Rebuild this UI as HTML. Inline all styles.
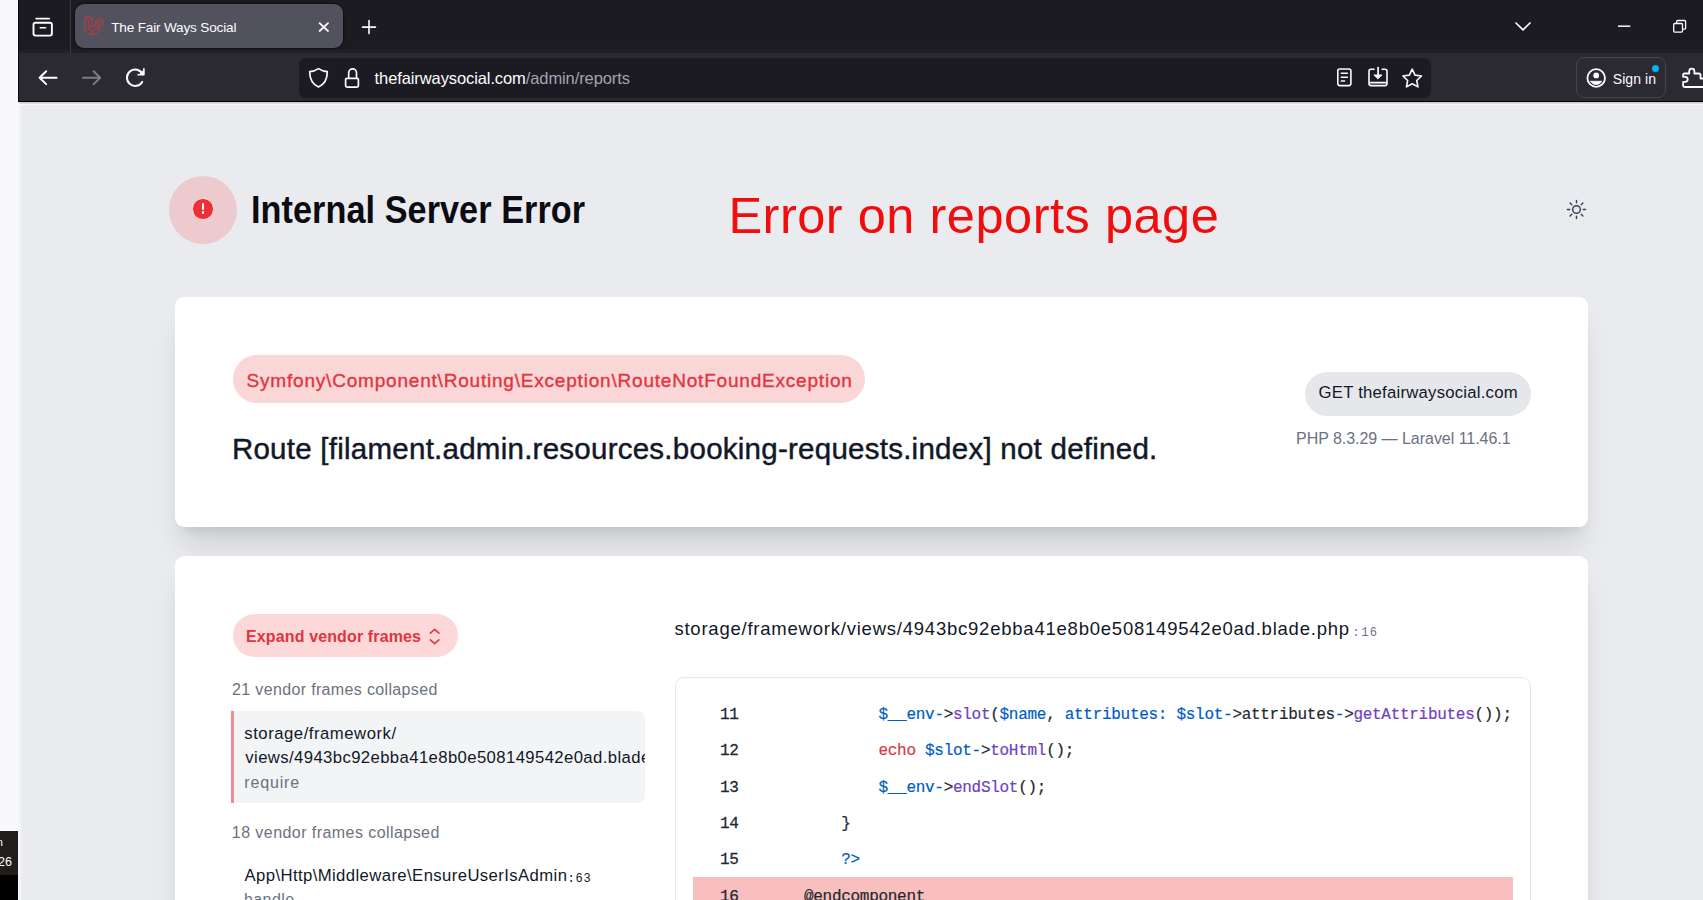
<!DOCTYPE html>
<html lang="en">
<head>
<meta charset="utf-8">
<title>The Fair Ways Social</title>
<style>
*{box-sizing:border-box;margin:0;padding:0}
html,body{width:1703px;height:900px;overflow:hidden;background:#eaebef;font-family:"Liberation Sans",sans-serif;color:#111827}
.abs{position:absolute}
.t{position:absolute;white-space:nowrap;line-height:1;transform-origin:0 0}
svg{position:absolute;overflow:visible}
#leftstrip{left:0;top:0;width:18px;height:900px;background:#f9f9fd}
#leftedge{left:18px;top:101px;width:3.5px;height:799px;background:linear-gradient(90deg,#f6f7fa,#f1f2f6 60%,#eaebef)}
#leftdark{left:0;top:831px;width:17.8px;height:44px;background:#201e1d}
#leftblack{left:0;top:875px;width:17.8px;height:26px;background:#000}
#tabbar{left:19px;top:0;width:1684px;height:53px;background:linear-gradient(#1c1b22 0,#1c1b22 47px,#222128 53px)}
#toolbar{left:19px;top:53px;width:1684px;height:48px;background:#2b2a33}
#chromeline{left:19px;top:100px;width:1684px;height:5px;background:linear-gradient(#2c2c31 0,#2c2c31 1px,#000 1px,#000 2px,#cbccd1 2px,#cbccd1 3px,#dddde2 3px,#dddde2 4px,#f6f7fb 4px,#f6f7fb 5px)}
#winedge{left:18.3px;top:0;width:1px;height:101.5px;background:#0b0a10}
#tab{left:75px;top:4px;width:267.6px;height:44px;border-radius:9px;background:#52525e;box-shadow:0 0 1.5px 1px rgba(0,0,0,.45)}
#tabsep{left:70px;top:0;width:1px;height:53px;background:#3b3a44}
#urlbar{left:299.3px;top:57.5px;width:1132px;height:40.2px;border-radius:7px;background:#1c1b22}
#signin{left:1576px;top:57px;width:90px;height:41px;border-radius:8px;border:1px solid #45444f;background:#2b2a33}
.card{position:absolute;background:#fff;border-radius:9px;box-shadow:0 25px 31px -6px rgba(0,0,0,.1),0 10px 12.5px -7.5px rgba(0,0,0,.1)}
.mono{font-family:"Liberation Mono",monospace}
.code{position:absolute;white-space:pre;line-height:1;font-family:"Liberation Mono",monospace;font-size:16px;letter-spacing:-0.29px;color:#24292e;-webkit-text-stroke:0.2px}
.ln{position:absolute;white-space:pre;line-height:1;font-family:"Liberation Mono",monospace;font-size:16px;letter-spacing:-0.29px;color:#1f2937;-webkit-text-stroke:0.3px #1f2937}
.b{color:#005cc5}.p{color:#6f42c1}.r{color:#d73a49}
</style>
</head>
<body>
<div class="abs" id="leftstrip"></div>
<div class="abs" id="leftedge"></div>
<div class="abs" id="leftdark"></div>
<div class="abs" id="leftblack"></div>
<div class="t" style="left:-3.3px;top:837.4px;font-size:11px;color:#fff">n</div>
<div class="t" style="left:-1.9px;top:855.6px;font-size:12.5px;color:#fff">26</div>

<!-- browser chrome -->
<div class="abs" id="tabbar"></div>
<div class="abs" id="toolbar"></div>
<div class="abs" id="chromeline"></div>
<div class="abs" id="winedge"></div>
<div class="abs" id="tabsep"></div>
<div class="abs" id="tab"></div>
<div class="t" id="tabtitle" style="left:111.20px;top:21.25px;font-size:13.6px;color:#fbfbfe;letter-spacing:-0.179px">The Fair Ways Social</div>
<div class="abs" id="urlbar"></div>
<div class="t" id="url" style="left:374.60px;top:70.00px;font-size:16.5px;color:#fbfbfe;letter-spacing:-0.100px">thefairwaysocial.com<span style="color:#a3a3ad">/admin/reports</span></div>
<div class="abs" id="signin"></div>
<div class="t" id="signintxt" style="left:1612.70px;top:71.85px;font-size:14px;color:#fbfbfe;letter-spacing:0.100px">Sign in</div>
<div class="abs" style="left:1652px;top:65px;width:7px;height:7px;border-radius:50%;background:#00b3f4"></div>

<!-- ICONS-CHROME -->
<svg id="chromeicons" style="left:0;top:0" width="1703" height="110" viewBox="0 0 1703 110" fill="none" stroke="#fbfbfe" stroke-width="1.7" stroke-linecap="round" stroke-linejoin="round">
  <!-- firefox view -->
  <path d="M36.200 18.600H49.200" stroke-width="1.900"/>
  <rect x="33.500" y="22.800" width="18.400" height="12.800" rx="2" stroke-width="1.900"/>
  <path d="M40.200 27.700H45.600" stroke-width="1.500"/>
  <!-- favicon (laravel mark) -->
  <g transform="translate(84.500 15.800) scale(0.385)" stroke="#d8373f" stroke-width="1.300" fill="#d8373f" opacity="0.7">
    <path fill-rule="evenodd" d="M49.626 11.564a.809.809 0 0 1 .028.209v10.972a.8.8 0 0 1-.402.694l-9.209 5.302V39.250c0 .286-.152.550-.4.694L20.420 51.010c-.044.025-.092.041-.14.058-.018.006-.035.017-.054.022a.805.805 0 0 1-.41 0c-.022-.006-.042-.018-.063-.026-.044-.016-.09-.03-.132-.054L.402 39.944A.801.801 0 0 1 0 39.250V6.334c0-.072.010-.142.028-.21.006-.023.020-.044.028-.067.015-.042.029-.085.051-.124.015-.026.037-.047.055-.071.023-.032.044-.065.071-.093.023-.023.053-.04.079-.06.029-.024.055-.05.088-.069h.001l9.610-5.533a.802.802 0 0 1 .8 0l9.610 5.533h.002c.032.020.059.045.088.068.026.020.055.038.078.060.028.029.048.062.072.094.017.024.040.045.054.071.023.040.036.082.052.124.008.023.022.044.028.068a.809.809 0 0 1 .028.209v20.559l8.008-4.611v-10.510c0-.07.010-.141.028-.208.007-.024.020-.045.028-.068.016-.042.030-.085.052-.124.015-.026.037-.047.054-.071.024-.032.044-.065.072-.093.023-.023.052-.04.078-.06.030-.024.056-.05.088-.069h.001l9.611-5.533a.801.801 0 0 1 .8 0l9.610 5.533c.034.020.060.045.090.068.025.020.054.038.077.060.028.029.048.062.072.094.018.024.040.045.054.071.023.039.036.082.052.124.009.023.022.044.028.068zm-1.574 10.718v-9.124l-3.363 1.936-4.646 2.675v9.124l8.010-4.611zm-9.610 16.505v-9.130l-4.570 2.610-13.050 7.448v9.216l17.620-10.144zM1.602 7.719v31.068L19.220 48.930v-9.214l-9.204-5.209-.003-.002-.004-.002c-.031-.018-.057-.044-.086-.066-.025-.02-.054-.036-.076-.058l-.002-.003c-.026-.025-.044-.056-.066-.084-.02-.027-.044-.05-.06-.078l-.001-.003c-.018-.03-.029-.066-.042-.1-.013-.03-.03-.058-.038-.09v-.001c-.010-.038-.012-.078-.016-.117-.004-.03-.012-.06-.012-.09v-.002-21.481L4.965 9.654 1.602 7.720zm8.810-5.994L2.405 6.334l8.005 4.609 8.006-4.610-8.006-4.608zm4.164 28.764l4.645-2.674V7.719l-3.363 1.936-4.646 2.675v20.096l3.364-1.937zM39.243 7.164l-8.006 4.609 8.006 4.609 8.005-4.610-8.005-4.608zm-.801 10.605l-4.646-2.675-3.363-1.936v9.124l4.645 2.674 3.364 1.937v-9.124zM20.020 38.330l11.743-6.704 5.870-3.350-8-4.606-9.211 5.303-8.395 4.833 7.993 4.524z"/>
  </g>
  <!-- tab close -->
  <path d="M319.600 23.200L328 31M328 23.200L319.600 31" stroke-width="1.800"/>
  <!-- new tab plus -->
  <path d="M362.500 27.100H375.500M369 20.600V33.600" stroke-width="1.600"/>
  <!-- list all tabs chevron -->
  <path d="M1516 23L1523 29.800L1530 23" stroke-width="1.700"/>
  <!-- minimize -->
  <path d="M1618 26.200H1630.300" stroke-width="1.500" stroke-linecap="butt"/>
  <!-- restore -->
  <rect x="1673.700" y="23.500" width="8.800" height="8.600" rx="1" stroke-width="1.300"/>
  <path d="M1676.700 23.300V21.500a1 1 0 0 1 1-1H1684.600a1 1 0 0 1 1 1V28.200a1 1 0 0 1 -1 1H1682.800" stroke-width="1.300"/>
  <!-- back -->
  <path d="M56.600 77.700H39.800M46.200 71.300L39.600 77.700L46.200 84.100" stroke-width="2"/>
  <!-- forward -->
  <path d="M83 77.700H100M93.600 71.300L100.200 77.700L93.600 84.100" stroke="#7c7c87" stroke-width="2"/>
  <!-- reload -->
  <path d="M142.600 74.300A8.200 8.200 0 1 0 142.200 81.900" stroke-width="2"/>
  <path d="M143.900 68.800V74.700H138" stroke-width="1.600"/>
  <path d="M143.900 69.500V74.700H138.700Z" fill="#fbfbfe" stroke="none"/>
  <!-- shield -->
  <path d="M318.500 68.600C321.500 70.600 324.500 71.500 327.300 71.700C327.300 79 324.500 84.200 318.500 87C312.500 84.200 309.700 79 309.700 71.700C312.500 71.500 315.500 70.600 318.500 68.600Z" stroke-width="1.700"/>
  <!-- lock -->
  <rect x="345.600" y="78.300" width="12.800" height="8.800" rx="1.500" stroke-width="1.700"/>
  <path d="M348.700 78V72.800a3.900 3.900 0 0 1 7.800 0V78" stroke-width="1.700"/>
  <!-- reader -->
  <rect x="1337.800" y="69" width="13.100" height="16.600" rx="2" stroke-width="1.600"/>
  <path d="M1341.300 73.300H1347.400M1341.300 77.300H1347.400M1341.300 80.900H1344.600" stroke-width="1.500"/>
  <!-- install / pwa -->
  <path d="M1374 69.300H1371a2 2 0 0 0 -2 2V83.600a2 2 0 0 0 2 2H1385a2 2 0 0 0 2 -2V71.300a2 2 0 0 0 -2 -2H1382.200M1369 82.600H1387" stroke-width="1.600"/>
  <path d="M1378.100 67.600V76" stroke-width="1.700"/>
  <path d="M1374.300 75H1381.900L1378.100 78.600Z" fill="#fbfbfe" stroke-width="1"/>
  <!-- star -->
  <path d="M1412.200 69.200L1415.050 75.150L1421.500 76L1416.750 80.500L1417.950 86.900L1412.200 83.750L1406.450 86.900L1407.650 80.500L1402.900 76L1409.350 75.150Z" stroke-width="1.600"/>
  <!-- avatar -->
  <circle cx="1596.200" cy="78" r="8.800" stroke-width="1.800"/>
  <circle cx="1596.200" cy="75.400" r="2.900" fill="#fbfbfe" stroke="none"/>
  <path d="M1590.600 81.300H1601.800A6.500 6.500 0 0 1 1590.600 81.300Z" fill="#fbfbfe" stroke-width="0.800"/>
  <!-- extensions puzzle -->
  <path d="M1689.200 73.500V71.200a2.600 2.600 0 0 1 5.200 0V73.500H1699a1.500 1.500 0 0 1 1.500 1.500V78.500H1703M1703 87H1684.600a1.500 1.500 0 0 1 -1.500 -1.500V81.800H1685.200a2.500 2.500 0 0 0 0 -5H1683.100V75a1.500 1.500 0 0 1 1.500 -1.500H1689.200" stroke-width="1.800"/>
</svg>
<!-- /ICONS-CHROME -->

<!-- page -->
<div class="abs" id="errcircle" style="left:169px;top:175.5px;width:68px;height:68px;border-radius:50%;background:#eccacd"></div>
<div class="abs" id="errdot" style="left:192.3px;top:198.3px;width:21.4px;height:21.4px;border-radius:50%;background:#ec3036;border:1.2px solid #f6e3e4"></div>
<div class="abs" style="left:202px;top:203.3px;width:2px;height:6.500px;border-radius:1px;background:#fff"></div>
<div class="abs" style="left:201.800px;top:211.400px;width:2.400px;height:2.400px;border-radius:50%;background:#fff"></div>
<div class="t" id="h1" style="left:251.00px;top:190.9px;font-size:38px;font-weight:bold;color:#0b0b12;transform:scaleX(0.9);letter-spacing:0.080px">Internal Server Error</div>
<div class="t" id="annot" style="left:728.40px;top:190.85px;font-size:50.5px;color:#f00d0d;letter-spacing:0.520px">Error on reports page</div>
<svg id="sun" style="left:1565px;top:198px" width="23" height="23" viewBox="0 0 24 24" fill="none" stroke="#374151" stroke-width="1.5" stroke-linecap="round"><circle cx="12" cy="12" r="4"/><path d="M12 2.5v2.5M12 19v2.500M2.500 12h2.500M19 12h2.500M5.300 5.300l1.800 1.800M16.900 16.900l1.800 1.800M5.300 18.700l1.800-1.800M16.900 7.100l1.800-1.800"/></svg>

<div class="card" id="card1" style="left:174.7px;top:296.5px;width:1413.3px;height:230.2px"></div>
<div class="abs" id="badge1" style="left:233px;top:355px;width:632px;height:48px;border-radius:24px;background:#fbd6d7"></div>
<div class="t" id="badge1t" style="left:246.60px;top:370.60px;font-size:19px;color:#e2343f;-webkit-text-stroke:0.35px #e2343f;letter-spacing:0.798px">Symfony\Component\Routing\Exception\RouteNotFoundException</div>
<div class="t" id="msg" style="left:231.90px;top:434.30px;font-size:29.5px;color:#111827;-webkit-text-stroke:0.45px #111827;letter-spacing:0.252px">Route [filament.admin.resources.booking-requests.index] not defined.</div>
<div class="abs" id="getbadge" style="left:1305px;top:372px;width:225.500px;height:43.700px;border-radius:22px;background:#e5e7eb"></div>
<div class="t" id="gett" style="left:1318.60px;top:384.80px;font-size:16.700px;color:#111827;letter-spacing:0.239px">GET thefairwaysocial.com</div>
<div class="t" id="phpt" style="left:1296.00px;top:430.50px;font-size:16px;color:#6b7280;letter-spacing:-0.033px">PHP 8.3.29 — Laravel 11.46.1</div>

<div class="card" id="card2" style="left:174.7px;top:556.2px;width:1413.3px;height:400px"></div>
<div class="abs" id="expbadge" style="left:233px;top:614.2px;width:225.2px;height:43px;border-radius:22px;background:#fcd8d9"></div>
<div class="t" id="expt" style="left:246.00px;top:629.00px;font-size:16px;font-weight:bold;color:#e2343f;letter-spacing:0.132px">Expand vendor frames</div>
<svg id="chev" style="left:428.4px;top:626.6px" width="13.3" height="19" viewBox="0 0 14 20" fill="none" stroke="#e2343f" stroke-width="1.600" stroke-linecap="round" stroke-linejoin="round"><path d="M2.500 6.500L7 2.500l4.500 4M2.500 13.500L7 17.500l4.500-4"/></svg>
<div class="t" id="v21" style="left:232.00px;top:682.20px;font-size:16px;color:#6b7280;letter-spacing:0.352px">21 vendor frames collapsed</div>
<div class="abs" id="framebox" style="left:231px;top:711px;width:414px;height:91.500px;background:#f3f4f6;border-left:3px solid #ef8b91;border-radius:0 7px 7px 0;overflow:hidden">
  <div class="t" id="f1" style="left:10.30px;top:14.70px;font-size:16.700px;color:#111827;letter-spacing:0.524px">storage/framework/</div>
  <div class="t" id="f2" style="left:11.30px;top:39.20px;font-size:16.700px;color:#111827;letter-spacing:0.395px"><span id="f2a">views/4943bc92ebba41e8b0e508149542e0ad.blad</span>e.php</div>
  <div class="t" id="f3" style="left:10.30px;top:63.50px;font-size:16px;color:#6b7280;letter-spacing:0.833px">require</div>
</div>
<div class="t" id="v18" style="left:231.80px;top:825.00px;font-size:16px;color:#6b7280;letter-spacing:0.440px">18 vendor frames collapsed</div>
<div class="t" id="app" style="left:244.50px;top:867.90px;font-size:16.7px;color:#111827;letter-spacing:0.403px">App\Http\Middleware\EnsureUserIsAdmin</div>
<div class="t mono" id="app63" style="left:567.50px;top:873.00px;font-size:12px;color:#111827;letter-spacing:0.750px">:63</div>
<div class="t" id="handle" style="left:244.00px;top:892.20px;font-size:16px;color:#6b7280;letter-spacing:0.400px">handle</div>

<div class="t" id="path" style="left:674.40px;top:620.30px;font-size:18.5px;color:#111827;letter-spacing:0.774px">storage/framework/views/4943bc92ebba41e8b0e508149542e0ad.blade.php</div>
<div class="t mono" id="l16" style="left:1352.50px;top:626.70px;font-size:12px;color:#6b7280;letter-spacing:1.450px">:16</div>
<div class="abs" id="codebox" style="left:675px;top:677px;width:856px;height:260px;border:1px solid #e5e7eb;border-radius:9px;background:#fff"></div>
<div class="abs" id="hl" style="left:693px;top:876.80px;width:820px;height:30px;background:#f9bfbf"></div>

<div class="ln" style="left:720px;top:707px">11</div>
<div class="ln" style="left:720px;top:743.3px">12</div>
<div class="ln" style="left:720px;top:779.7px">13</div>
<div class="ln" style="left:720px;top:816.1px">14</div>
<div class="ln" style="left:720px;top:852.4px">15</div>
<div class="ln" style="left:720px;top:888.7px">16</div>
<div class="code" id="c11" style="left:878.500px;top:707px"><span class="b">$__env</span><span class="b">-</span>&gt;<span class="p">slot</span>(<span class="b">$name</span>, <span class="b">attributes:</span> <span class="b">$slot-</span>&gt;attributes<span class="b">-</span>&gt;<span class="p">getAttributes</span>());</div>
<div class="code" id="c12" style="left:878.500px;top:743.3px"><span class="r">echo</span> <span class="b">$slot-</span>&gt;<span class="p">toHtml</span>();</div>
<div class="code" id="c13" style="left:878.500px;top:779.7px"><span class="b">$__env-</span>&gt;<span class="p">endSlot</span>();</div>
<div class="code" id="c14" style="left:841.300px;top:816.1px">}</div>
<div class="code" id="c15" style="left:841.300px;top:852.4px"><span class="b">?&gt;</span></div>
<div class="code" id="c16" style="left:804px;top:888.7px">@endcomponent</div>
</body>
</html>
